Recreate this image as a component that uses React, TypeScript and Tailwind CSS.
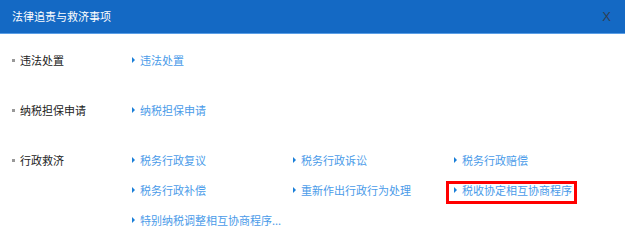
const font = { fontFamily: '"Noto Sans CJK SC", "Noto Sans", sans-serif' };

type Row = { label: string; links: string[] };

const rows: Row[] = [
  { label: "违法处置", links: ["违法处置"] },
  { label: "纳税担保申请", links: ["纳税担保申请"] },
  {
    label: "行政救济",
    links: [
      "税务行政复议",
      "税务行政诉讼",
      "税务行政赔偿",
      "税务行政补偿",
      "重新作出行政行为处理",
      "税收协定相互协商程序",
      "特别纳税调整相互协商程序...",
    ],
  },
];

function LinkItem({ text, marked }: { text: string; marked?: boolean }) {
  return (
    <div className="relative flex h-[30px] items-center">
      <span className="mr-[5px] h-0 w-0 border-y-[3px] border-l-[3px] border-y-transparent border-l-[#1a7fd8]" />
      <span className="text-[11px] text-[#4a9be9]">{text}</span>
      {marked && (
        <span className="pointer-events-none absolute left-[-8px] top-[6px] h-[23px] w-[131px] border-[3px] border-[#ff0000]" />
      )}
    </div>
  );
}

export default function App() {
  return (
    <div className="h-[243px] w-[625px] bg-white" style={font}>
      <div className="flex h-[34px] items-center justify-between border-b border-[#5a9ee6] bg-[#1469c4] pl-[12px] pr-[14px]">
        <span className="text-[11px] text-white">法律追责与救济事项</span>
        <span className="text-[13px] text-[#2f3f55]" style={{ fontFamily: '"Liberation Sans", sans-serif' }}>
          X
        </span>
      </div>
      <div className="flex flex-col gap-[20px] pt-[11px]">
        {rows.map((row) => (
          <div key={row.label} className="flex min-h-[30px]">
            <div className="flex h-[30px] w-[132px] shrink-0 items-center pl-[12px]">
              <span className="mr-[5px] h-[3px] w-[3px] bg-[#999]" />
              <span className="text-[11px] text-[#222]">{row.label}</span>
            </div>
            <div className="grid grid-cols-[161px_161px_161px]">
              {row.links.map((l) => (
                <LinkItem key={l} text={l} marked={l === "税收协定相互协商程序"} />
              ))}
            </div>
          </div>
        ))}
      </div>
    </div>
  );
}
